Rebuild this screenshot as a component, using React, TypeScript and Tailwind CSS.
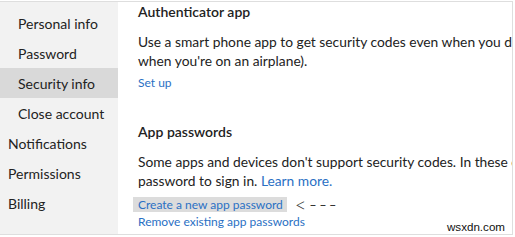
import React from "react";

const font = { fontFamily: 'Lato, "Noto Sans", sans-serif' };

export default function App() {
  const sub = ["Personal info", "Password", "Security info", "Close account"];
  const top = ["Notifications", "Permissions", "Billing"];
  return (
    <div className="w-[515px] h-[237px] bg-white relative overflow-hidden" style={font}>
      <div className="mt-[1px] w-[513px] h-[234px] border-t border-r border-b border-[#dedede] flex overflow-hidden">
        <div className="w-[118px] shrink-0 bg-[#f2f2f2] pt-[6px] text-[14px] text-[#222]">
          {sub.map((s) => (
            <div
              key={s}
              className={`h-[30px] flex items-center pl-[18px] ${s === "Security info" ? "bg-[#d9d9d9]" : ""}`}
            >
              {s}
            </div>
          ))}
          {top.map((s) => (
            <div key={s} className="h-[30px] flex items-center pl-[8px]">
              {s}
            </div>
          ))}
        </div>
        <div className="flex-1 pl-[20px] text-[#222] whitespace-nowrap overflow-hidden">
          <div className="text-[14px] font-semibold leading-[20px]">Authenticator app</div>
          <div className="text-[13.8px] leading-[19px] mt-[10px]">
            <div>Use a smart phone app to get security codes even when you don't have a phone signal (for example,</div>
            <div>when you're on an airplane).</div>
          </div>
          <div className="text-[12px] leading-[18px] text-[#2a70c4] mt-[4px]">Set up</div>
          <div className="text-[14px] font-semibold leading-[20px] mt-[30px]">App passwords</div>
          <div className="text-[13.8px] leading-[19px] mt-[10px]">
            <div>Some apps and devices don't support security codes. In these cases, you'll need an app</div>
            <div>
              password to sign in. <span className="text-[#2a70c4]">Learn more.</span>
            </div>
          </div>
          <div className="flex items-center mt-[7px] -ml-[5px]">
            <span className="bg-[#dcdcdc] text-[#2a70c4] text-[12px] leading-[15px] pl-[5px] pr-[4px]">
              Create a new app password
            </span>
            <span className="ml-[8px] flex items-center text-[#333]">
              <span className="text-[20px] leading-[15px] font-light">&lt;</span>
              <span className="ml-[3px] text-[12px] leading-[15px] tracking-[3px] font-bold">–––</span>
            </span>
          </div>
          <div className="text-[12px] leading-[16px] text-[#2a70c4] mt-[2px]">Remove existing app passwords</div>
        </div>
      </div>
      <div
        className="absolute left-[447px] top-[220px] text-[11.6px] leading-[13px] text-[#111]"
        style={{ fontFamily: '"Liberation Sans", Arial, sans-serif' }}
      >
        wsxdn.com
      </div>
    </div>
  );
}
